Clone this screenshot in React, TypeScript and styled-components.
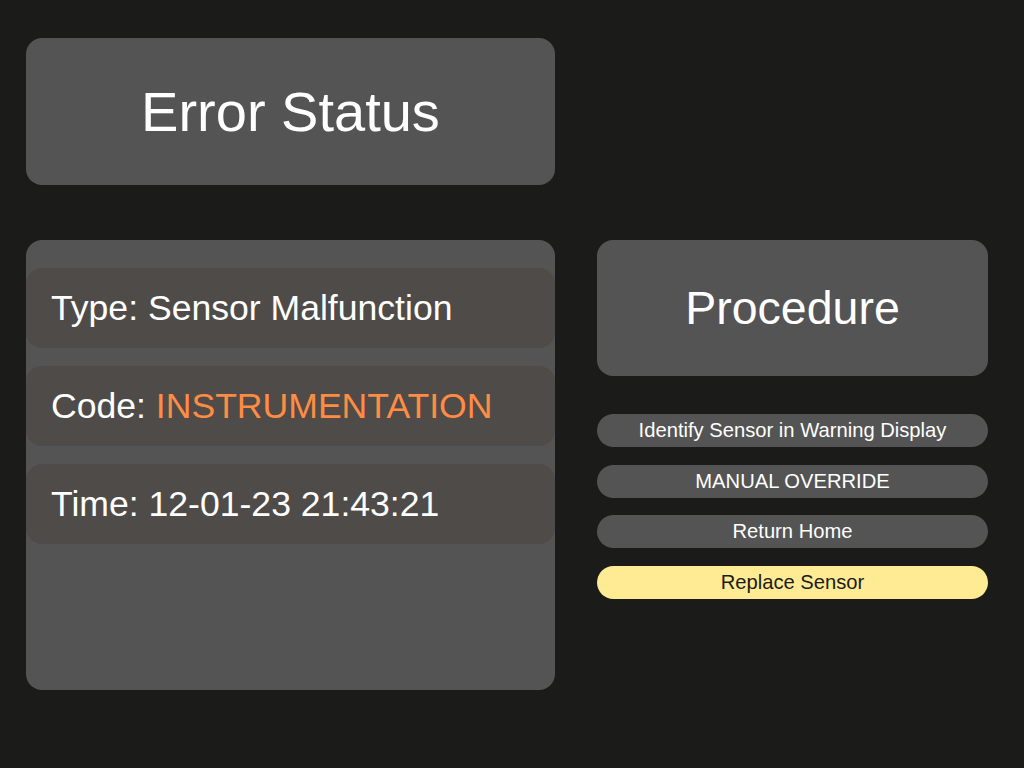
import React from "react";
import styled, { createGlobalStyle } from "styled-components";

const GlobalStyle = createGlobalStyle`
  html, body {
    margin: 0;
    padding: 0;
    background: #1b1c1a;
    font-family: "Liberation Sans", Arial, sans-serif;
  }
  * { box-sizing: border-box; }
`;

const Page = styled.div`
  width: 1024px;
  height: 768px;
  padding: 38px 36px 0 26px;
  display: grid;
  grid-template-columns: 529px 391px;
  grid-template-rows: 147px 450px;
  column-gap: 42px;
  row-gap: 55px;
  grid-template-areas:
    "header ."
    "details procedure";
`;

const HeaderCard = styled.div`
  grid-area: header;
  background: #545454;
  border-radius: 16px;
  display: flex;
  align-items: center;
  justify-content: center;
  color: #ffffff;
  font-size: 56px;
`;

const DetailsPanel = styled.section`
  grid-area: details;
  background: #545454;
  border-radius: 16px;
  padding-top: 28px;
  display: flex;
  flex-direction: column;
  gap: 18px;
`;

const DetailRow = styled.div`
  height: 80px;
  background: #4e4b49;
  border-radius: 16px;
  display: flex;
  align-items: center;
  padding-left: 25px;
  color: #ffffff;
  font-size: 35.6px;
  white-space: nowrap;
`;

const Highlight = styled.span`
  color: #ff8c42;
`;

const ProcedureColumn = styled.section`
  grid-area: procedure;
  display: flex;
  flex-direction: column;
`;

const ProcedureCard = styled.div`
  height: 136px;
  background: #545454;
  border-radius: 16px;
  display: flex;
  align-items: center;
  justify-content: center;
  color: #ffffff;
  font-size: 46.5px;
  margin-bottom: 38px;
`;

const StepList = styled.div`
  display: flex;
  flex-direction: column;
  gap: 17.5px;
`;

const StepButton = styled.div<{ $active?: boolean }>`
  height: 33px;
  border-radius: 16.5px;
  background: ${(p) => (p.$active ? "#ffeb94" : "#545454")};
  color: ${(p) => (p.$active ? "#1b1c1a" : "#ffffff")};
  display: flex;
  align-items: center;
  justify-content: center;
  font-size: 20.2px;
  white-space: nowrap;
`;

const steps = [
  { label: "Identify Sensor in Warning Display" },
  { label: "MANUAL OVERRIDE" },
  { label: "Return Home" },
  { label: "Replace Sensor", active: true },
];

export default function App() {
  return (
    <>
      <GlobalStyle />
      <Page>
        <HeaderCard>Error Status</HeaderCard>
        <DetailsPanel>
          <DetailRow>Type: Sensor Malfunction</DetailRow>
          <DetailRow>
            Code:&nbsp;<Highlight>INSTRUMENTATION</Highlight>
          </DetailRow>
          <DetailRow>Time: 12-01-23 21:43:21</DetailRow>
        </DetailsPanel>
        <ProcedureColumn>
          <ProcedureCard>Procedure</ProcedureCard>
          <StepList>
            {steps.map((s) => (
              <StepButton key={s.label} $active={s.active}>
                {s.label}
              </StepButton>
            ))}
          </StepList>
        </ProcedureColumn>
      </Page>
    </>
  );
}
